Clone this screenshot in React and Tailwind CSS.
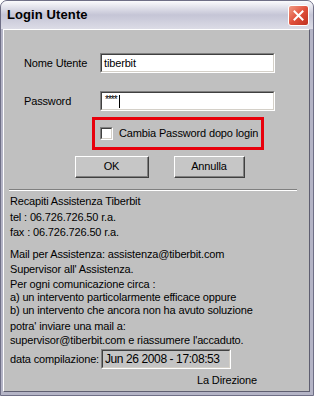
import React from "react";

const font = { fontFamily: '"Liberation Sans", Arial, sans-serif' };

function Sunken({ className = "", children }) {
  return (
    <div className={`border-t border-l border-t-[#808080] border-l-[#808080] border-b border-r border-b-white border-r-white ${className}`}>
      <div className="h-full w-full border-t border-l border-t-[#404040] border-l-[#404040] border-b border-r border-b-[#d4d0c8] border-r-[#d4d0c8]">
        {children}
      </div>
    </div>
  );
}

function Button({ className = "", children }) {
  return (
    <div className={`border-t border-l border-t-white border-l-white border-b border-r border-b-[#404040] border-r-[#404040] bg-[#c6c6c6] ${className}`}>
      <div className="h-full w-full border-b border-r border-b-[#808080] border-r-[#808080] flex items-center justify-center text-[11px] text-black">
        {children}
      </div>
    </div>
  );
}

export default function App() {
  return (
    <div className="w-[314px] h-[396px] bg-white whitespace-nowrap" style={font}>
      <div className="w-[314px] h-[396px] rounded-t-[7px] border border-[#6f6f86] bg-[#b4b4c6] flex flex-col overflow-hidden">
        {/* Title bar */}
        <div className="h-[28px] shrink-0 flex items-center justify-between pl-[6px] pr-[4px] bg-gradient-to-b from-[#fbfbfd] via-[#c5c5d6] to-[#dcdce6]">
          <span className="text-[13px] font-bold text-black tracking-[0.1px]">Login Utente</span>
          <div className="w-[21px] h-[21px] rounded-[3px] border border-white bg-gradient-to-br from-[#f09a84] via-[#e0503c] to-[#c0301e] flex items-center justify-center">
            <svg width="11" height="11" viewBox="0 0 11 11">
              <path d="M1.5 1.5 L9.5 9.5 M9.5 1.5 L1.5 9.5" stroke="white" strokeWidth="2" strokeLinecap="square" />
            </svg>
          </div>
        </div>
        {/* Body */}
        <div className="flex-1 ml-[2px] mr-[3px] mb-[3px] border-t border-l border-t-white border-l-white border-b border-r border-b-[#5e5e70] border-r-[#5e5e70] bg-[#c0c0c0] flex flex-col text-[11px] tracking-[-0.15px] text-black">
          {/* Row 1 */}
          <div className="flex items-center mt-[23px] pl-[20px]">
            <span className="w-[76px]">Nome Utente</span>
            <Sunken className="w-[175px] h-[20px] bg-white">
              <div className="h-full flex items-center pl-[2px] bg-white">tiberbit</div>
            </Sunken>
          </div>
          {/* Row 2 */}
          <div className="flex items-center mt-[18px] pl-[20px]">
            <span className="w-[76px]">Password</span>
            <Sunken className="w-[175px] h-[20px] bg-white">
              <div className="h-full flex items-center pl-[3px] bg-white">
                <span className="text-[10px] leading-none tracking-[-1px] -mt-[2px]">****</span>
                <span className="inline-block w-px h-[13px] bg-black ml-[2px]"></span>
              </div>
            </Sunken>
          </div>
          {/* Red box */}
          <div className="ml-[88px] mt-[6px] w-[172px] h-[33px] border-[3px] border-[#e8000c] flex items-center pl-[5px]">
            <Sunken className="w-[13px] h-[13px] bg-white shrink-0">
              <div className="h-full w-full bg-white"></div>
            </Sunken>
            <span className="ml-[6px]">Cambia Password dopo login</span>
          </div>
          {/* Buttons */}
          <div className="flex mt-[6px] ml-[71px] gap-[25px]">
            <Button className="w-[74px] h-[22px]">OK</Button>
            <Button className="w-[71px] h-[22px]">Annulla</Button>
          </div>
          {/* Separator */}
          <div className="ml-[5px] mt-[11px] w-[288px] border-t border-t-[#808080] border-b border-b-white"></div>
          {/* Info text */}
          <div className="pl-[6px] leading-[13px]">
            <div className="mt-[4px]">Recapiti Assistenza Tiberbit</div>
            <div className="mt-[3px]">tel : 06.726.726.50 r.a.</div>
            <div className="mt-[2px]">fax : 06.726.726.50 r.a.</div>
            <div className="mt-[9px]">Mail per Assistenza: assistenza@tiberbit.com</div>
            <div className="mt-[2px]">Supervisor all' Assistenza.</div>
            <div className="mt-[2px]">Per ogni comunicazione circa :</div>
            <div>a) un intervento particolarmente efficace oppure</div>
            <div>b) un intervento che ancora non ha avuto soluzione</div>
            <div className="mt-[3px]">potra' inviare una mail a:</div>
            <div className="mt-[1px]">supervisor@tiberbit.com e riassumere l'accaduto.</div>
          </div>
          <div className="flex items-center pl-[6px] mt-[2px]">
            <span className="w-[91px] shrink-0">data compilazione:</span>
            <Sunken className="w-[130px] h-[20px] shrink-0">
              <div className="h-full flex items-center pl-[2px] bg-[#c4c4c4] text-[12px] tracking-[-0.4px]">Jun 26 2008 - 17:08:53</div>
            </Sunken>
          </div>
          <div className="mt-[5px] pl-[193px] leading-[13px]">La Direzione</div>
        </div>
      </div>
    </div>
  );
}
